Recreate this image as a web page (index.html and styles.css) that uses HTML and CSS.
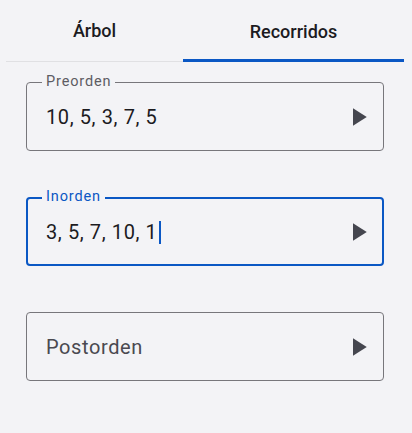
FILE: index.html
```html
<!DOCTYPE html>
<html lang="es">
<head>
<meta charset="utf-8">
<title>Recorridos</title>
<link rel="stylesheet" href="styles.css">
</head>
<body>
<div class="tabs">
  <div class="tab tab-left">Árbol</div>
  <div class="tab tab-right active">Recorridos</div>
</div>
<div class="fields">
  <div class="field">
    <span class="label">Preorden</span>
    <span class="value">10, 5, 3, 7, 5</span>
    <svg class="play" viewBox="0 0 24 24" width="30" height="30"><path d="M8 5v14l11-7z"/></svg>
  </div>
  <div class="field focused">
    <span class="label">Inorden</span>
    <span class="value">3, 5, 7, 10, 1<span class="caret"></span></span>
    <svg class="play" viewBox="0 0 24 24" width="30" height="30"><path d="M8 5v14l11-7z"/></svg>
  </div>
  <div class="field">
    <span class="value placeholder">Postorden</span>
    <svg class="play" viewBox="0 0 24 24" width="30" height="30"><path d="M8 5v14l11-7z"/></svg>
  </div>
</div>
</body>
</html>
```
FILE: styles.css
```css
* { box-sizing: border-box; }
html, body { margin: 0; padding: 0; }
body {
  background: #f3f3f6;
  font-family: Roboto, "Noto Sans", sans-serif;
  color: #1c1b1f;
  width: 412px;
  height: 433px;
  overflow: hidden;
}
.tabs {
  display: flex;
  margin-left: 6px;
  width: 398px;
  height: 62px;
  border-bottom: 1px solid #e0e0e3;
}
.tab {
  display: flex;
  align-items: center;
  justify-content: center;
  font-size: 18px;
  font-weight: 500;
  color: #1c1b1f;
  padding-top: 1px;
  padding-bottom: 1px;
}
.tab-left { width: 177px; }
.tab-right { width: 221px; }
.tab.active {
  border-bottom: 3px solid #0a57c4;
  margin-bottom: -1px;
  padding-bottom: 0;
  padding-top: 3px;
}
.fields {
  display: flex;
  flex-direction: column;
  gap: 46px;
  padding: 20px 28px 0 26px;
}
.field {
  position: relative;
  height: 69px;
  border: 1px solid #77767b;
  border-radius: 4px;
  display: flex;
  align-items: center;
  padding: 0 10px 0 19px;
}
.field.focused {
  border: 2px solid #0a57c4;
  padding: 0 9px 0 18px;
}
.label {
  position: absolute;
  top: -10px;
  left: 15px;
  padding: 0 4px;
  background: #f3f3f6;
  font-size: 14.5px;
  line-height: 18px;
  letter-spacing: 0.85px;
  color: #5d5c63;
}
.focused .label {
  left: 14px;
  top: -11px;
  color: #0a57c4;
}
.value {
  flex: 1;
  font-size: 20px;
  line-height: 24px;
  letter-spacing: 0.6px;
  color: #1c1b1f;
  display: flex;
  align-items: center;
  padding-top: 1px;
}
.placeholder { color: #4a4950; }
.caret {
  display: inline-block;
  width: 2px;
  height: 23px;
  background: #0a57c4;
  margin-left: 2px;
}
.play { fill: #45464f; display: block; }
```
